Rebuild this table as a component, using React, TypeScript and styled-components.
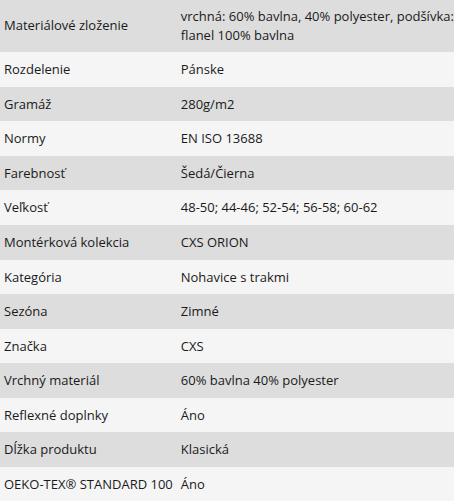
import React from "react";
import styled, { createGlobalStyle } from "styled-components";

const Global = createGlobalStyle`
  html, body { margin: 0; padding: 0; background: #ffffff; }
  body { font-family: "Open Sans", "Liberation Sans", sans-serif; }
`;

const Table = styled.table`
  width: 100%;
  border-collapse: collapse;
  border-spacing: 0;
  margin-top: -1px;
  font-family: "Open Sans", "Liberation Sans", sans-serif;
  font-size: 13px;
  line-height: 1.428571;
  color: #1a1a1a;
`;

const Row = styled.tr<{ $odd: boolean }>`
  background: ${(p) => (p.$odd ? "#dddddd" : "#f5f5f5")};
`;

const Label = styled.td`
  padding: 8px 4px;
  vertical-align: middle;
  white-space: nowrap;
`;

const Value = styled.td`
  padding: 8px 0 8px 4px;
  vertical-align: middle;
`;

const rows: [string, string][] = [
  ["Materiálové zloženie", "vrchná: 60% bavlna, 40% polyester, podšívka: flanel 100% bavlna"],
  ["Rozdelenie", "Pánske"],
  ["Gramáž", "280g/m2"],
  ["Normy", "EN ISO 13688"],
  ["Farebnosť", "Šedá/Čierna"],
  ["Veľkosť", "48-50; 44-46; 52-54; 56-58; 60-62"],
  ["Montérková kolekcia", "CXS ORION"],
  ["Kategória", "Nohavice s trakmi"],
  ["Sezóna", "Zimné"],
  ["Značka", "CXS"],
  ["Vrchný materiál", "60% bavlna 40% polyester"],
  ["Reflexné doplnky", "Áno"],
  ["Dĺžka produktu", "Klasická"],
  ["OEKO-TEX® STANDARD 100", "Áno"],
];

export default function App() {
  return (
    <>
      <Global />
      <Table>
        <tbody>
          {rows.map(([k, v], i) => (
            <Row key={k} $odd={i % 2 === 0}>
              <Label>{k}</Label>
              <Value>{v}</Value>
            </Row>
          ))}
        </tbody>
      </Table>
    </>
  );
}
